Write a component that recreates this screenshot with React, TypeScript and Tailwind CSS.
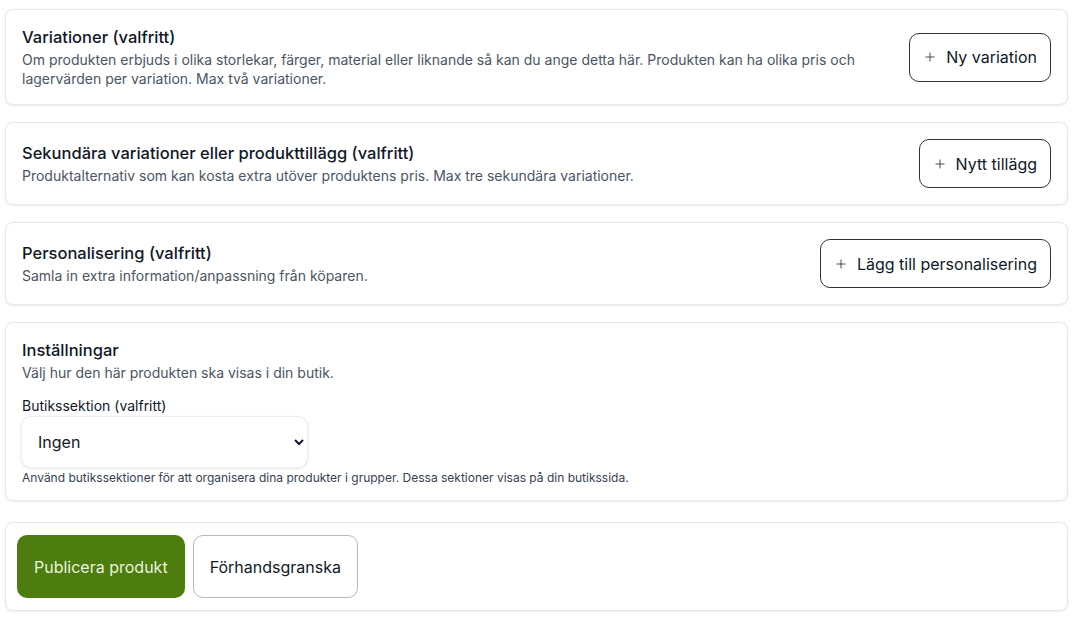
import { Plus } from "lucide-react";

function AddButton({ label }: { label: string }) {
  return (
    <button className="flex items-center gap-[9px] h-[49px] px-[13px] rounded-[10px] border border-[#2f3338] bg-white text-base text-[#111827] shrink-0">
      <Plus className="w-[14px] h-[14px] text-[#374151]" strokeWidth={1.6} />
      {label}
    </button>
  );
}

function Section({
  title,
  text,
  button,
}: {
  title: string;
  text: string;
  button: string;
}) {
  return (
    <div className="flex items-center justify-between gap-8 bg-white rounded-lg border border-[#e5e7eb] shadow-[0_1px_3px_rgba(0,0,0,0.08)] px-4 py-4">
      <div className="max-w-[860px]">
        <h2 className="text-[16.5px] font-medium text-[#111827] leading-[22px]">{title}</h2>
        <p className="text-sm text-[#4b5563] leading-[19px] mt-0.5">{text}</p>
      </div>
      <AddButton label={button} />
    </div>
  );
}

export default function App() {
  return (
    <main
      className="w-[1088px] min-h-[620px] bg-white pl-[5px] pr-5 pt-[9px] flex flex-col gap-[17px]"
      style={{ fontFamily: "Inter, 'Noto Sans', sans-serif" }}
    >
      <Section
        title="Variationer (valfritt)"
        text="Om produkten erbjuds i olika storlekar, färger, material eller liknande så kan du ange detta här. Produkten kan ha olika pris och lagervärden per variation. Max två variationer."
        button="Ny variation"
      />
      <Section
        title="Sekundära variationer eller produkttillägg (valfritt)"
        text="Produktalternativ som kan kosta extra utöver produktens pris. Max tre sekundära variationer."
        button="Nytt tillägg"
      />
      <Section
        title="Personalisering (valfritt)"
        text="Samla in extra information/anpassning från köparen."
        button="Lägg till personalisering"
      />

      <div className="bg-white rounded-lg border border-[#e5e7eb] shadow-[0_1px_3px_rgba(0,0,0,0.08)] px-4 pt-4 pb-[14px]">
        <h2 className="text-[16.5px] font-medium text-[#111827] leading-[22px]">Inställningar</h2>
        <p className="text-sm text-[#4b5563] leading-[19px] mt-0.5">
          Välj hur den här produkten ska visas i din butik.
        </p>
        <label className="block text-sm text-[#111827] mt-[14px] leading-5">
          Butikssektion (valfritt)
        </label>
        <select className="w-[287px] h-[52px] -ml-px rounded-[10px] border border-[#eceef0] bg-white pl-3 pr-[18px] text-base text-[#111827] shadow-[0_1px_3px_rgba(0,0,0,0.1)]">
          <option>Ingen</option>
        </select>
        <p className="text-xs text-[#374151] mt-0.5 leading-4">
          Använd butikssektioner för att organisera dina produkter i grupper. Dessa sektioner visas på din butikssida.
        </p>
      </div>

      <div className="mt-1 bg-white rounded-lg border border-[#e5e7eb] shadow-[0_1px_3px_rgba(0,0,0,0.08)] py-3 pl-[11px] pr-3 flex gap-2">
        <button className="h-[63px] px-[17px] rounded-[10px] bg-[#4d7c0f] text-base text-[#eaf3dc]">
          Publicera produkt
        </button>
        <button className="h-[63px] px-4 rounded-[10px] border border-[#b5b8bd] bg-white text-base text-[#111827]">
          Förhandsgranska
        </button>
      </div>
    </main>
  );
}
